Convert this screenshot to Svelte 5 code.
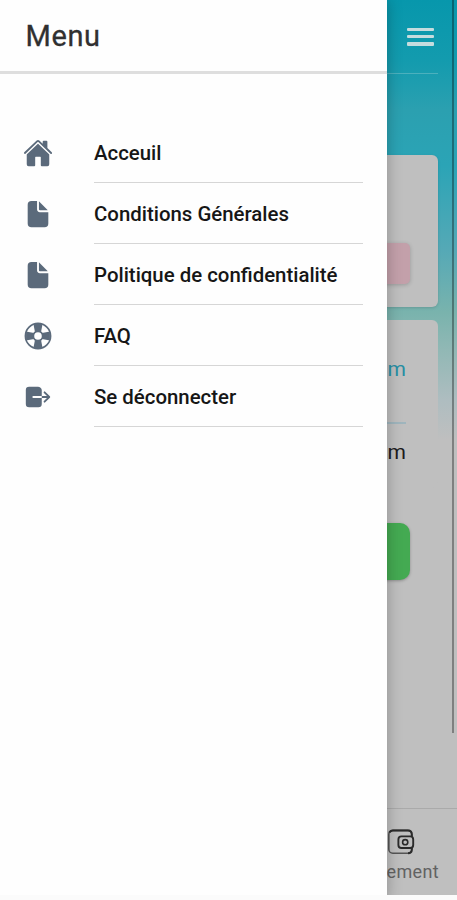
<script>
  const items = [
    { label: 'Acceuil', icon: 'home' },
    { label: 'Conditions Générales', icon: 'document' },
    { label: 'Politique de confidentialité', icon: 'document' },
    { label: 'FAQ', icon: 'help' },
    { label: 'Se déconnecter', icon: 'logout' }
  ];
</script>

<div class="app">
  <main class="page">
    <header class="topbar">
      <button class="burger" aria-label="Menu"><i></i><i></i><i></i></button>
    </header>
    <section class="card first"><div class="pink"></div></section>
    <section class="card second">
      <span class="unit blue">m</span>
      <div class="rule"></div>
      <span class="unit">m</span>
    </section>
    <div class="green"></div>
    <footer class="tabs">
      <svg class="wallet" viewBox="0 0 28 28" fill="none" stroke="#2b2b2b" stroke-width="1.6">
        <rect x="1.8" y="2.4" width="23" height="22.8" rx="4" stroke="#555" />
        <path d="M2.4 4.5Q3.4 2.4 5.8 2.4H21Q24.8 2.4 24.8 6.4V8.5M24.8 19.5V21.5Q24.8 25.2 21 25.2" stroke-width="2" />
        <rect x="11.4" y="8.4" width="14.8" height="11.6" rx="3" fill="#bfbfbf" stroke-width="1.9" />
        <circle cx="18.2" cy="14.2" r="2.6" />
      </svg>
      <span class="tab-label">ement</span>
    </footer>
    <div class="scrollbar"></div>
  </main>

  <aside class="drawer">
    <h1><span>Menu</span></h1>
    <nav>
      {#each items as item}
        <a class="item" href="#{item.icon}">
          <svg class="icon" viewBox="0 0 512 512" fill="currentColor">
            {#if item.icon === 'home'}
              <path d="M261.56 101.28a8 8 0 00-11.06 0L66.4 277.15a8 8 0 00-2.47 5.79L63.9 448a32 32 0 0032 32H192a16 16 0 0016-16V328a8 8 0 018-8h80a8 8 0 018 8v136a16 16 0 0016 16h96.06a32 32 0 0032-32V282.94a8 8 0 00-2.47-5.79z" />
              <path d="M490.91 244.15l-74.8-71.56V64a16 16 0 00-16-16h-48a16 16 0 00-16 16v32l-57.92-55.38C272.77 35.14 264.71 32 256 32c-8.68 0-16.72 3.14-22.14 8.63l-212.7 203.5c-6.22 6-7 15.87-1.34 22.37A16 16 0 0043 267.56L250.5 69.28a8 8 0 0111.06 0l207.52 198.28a16 16 0 0022.59-.44c6.14-6.36 5.63-16.86-.76-22.97z" />
            {:else if item.icon === 'document'}
              <path d="M428 224H288a48 48 0 01-48-48V36a4 4 0 00-4-4h-92a64 64 0 00-64 64v320a64 64 0 0064 64h224a64 64 0 0064-64V228a4 4 0 00-4-4z" />
              <path d="M419.22 188.59L275.41 44.78a2 2 0 00-3.41 1.41V176a16 16 0 0016 16h129.81a2 2 0 001.41-3.41z" />
            {:else if item.icon === 'help'}
              <circle cx="256" cy="256" r="215" fill="none" stroke="currentColor" stroke-width="28" />
              <circle cx="256" cy="256" r="80" fill="none" stroke="currentColor" stroke-width="30" />
              <path d="M178 52h156l-26 136H204zM178 460h156l-26-136H204zM52 178v156l136-26V204zM460 178v156l-136-26V204z" />
            {:else}
              <path d="M160 256a16 16 0 0116-16h144V136c0-32-33.79-56-64-56H104a56.06 56.06 0 00-56 56v240a56.06 56.06 0 0056 56h160a56.06 56.06 0 0056-56V272H176a16 16 0 01-16-16zM459.31 244.69l-80-80a16 16 0 00-22.62 22.62L409.37 240H320v32h89.37l-52.68 52.69a16 16 0 1022.62 22.62l80-80a16 16 0 000-22.62z" />
            {/if}
          </svg>
          <span class="label">{item.label}</span>
        </a>
      {/each}
    </nav>
  </aside>
</div>

<style>
  :global(body) { margin: 0; background: #fbfbfb; }
  .app {
    display: grid;
    grid-template-columns: 457px;
    width: 457px;
    height: 900px;
    overflow: hidden;
    font-family: Roboto, "Liberation Sans", sans-serif;
  }
  .page, .drawer { grid-area: 1 / 1; }
  .page {
    position: relative;
    box-sizing: border-box;
    height: 895px;
    display: flex;
    flex-direction: column;
    align-items: flex-end;
    background: linear-gradient(#0797ac 0, #139bae 60px, #2ba0b0 110px, #2ba4b6 165px, #55a9b6 250px, #79b3ad 312px, #91b8b5 350px, #aebdc0 400px, #bfbfbf 440px);
  }
  .topbar {
    box-sizing: border-box;
    width: 100%;
    height: 74px;
    padding: 28px 4px 0 0;
    flex: none;
    display: flex;
    justify-content: flex-end;
    border-bottom: 1px solid #4cb0bd;
    margin-right: 19px;
  }
  .burger {
    display: flex;
    flex-direction: column;
    gap: 4px;
    width: 27px;
    height: 18px;
    padding: 0;
    border: 0;
    background: none;
  }
  .burger i { height: 3.2px; width: 27px; flex: none; background: #c5dcde; border-radius: 1px; }
  .card {
    box-sizing: border-box;
    width: 400px;
    margin-right: 19px;
    border-radius: 6px;
    background: #bfbfbf;
    flex: none;
    display: flex;
    flex-direction: column;
    align-items: flex-end;
  }
  .first { height: 152px; margin-top: 81px; padding: 88px 28px 0; box-shadow: 0 1px 3px #0002; }
  .pink { width: 100px; height: 41px; border-radius: 5px; background: #c3a0aa; box-shadow: 0 1px 4px #0003; }
  .second { height: 168px; margin-top: 13px; padding: 36px 32px 0; }
  .unit { font-size: 21px; line-height: 26px; height: 26px; color: #1c1c1c; }
  .unit.blue { color: #288fa4; }
  .rule { width: 100px; height: 2px; background: #9fb5bd; margin: 40px 0 15px; }
  .green { width: 200px; height: 57px; margin: 35px 47px 0; flex: none; border-radius: 10px; background: #44aa52; box-shadow: 0 1px 3px #0004; }
  .tabs {
    box-sizing: border-box;
    width: 100%;
    height: 87px;
    margin-top: auto;
    padding: 19px 18px 0;
    border-top: 1px solid #aaa;
    display: flex;
    flex-direction: column;
    align-items: flex-end;
  }
  .wallet { width: 28px; height: 28px; margin-right: 24px; }
  .tab-label { margin-top: 4px; font-size: 18px; line-height: 24px; letter-spacing: 0.35px; color: #626262; }
  .scrollbar { position: absolute; top: 0; right: 3px; width: 2px; height: 733px; background: #0005; }
  .drawer {
    position: relative;
    z-index: 1;
    width: 387px;
    height: 900px;
    background: #fefefe;
    clip-path: inset(0 -18px 5px 0);
    box-shadow: 0 0 14px #0004;
  }
  h1 {
    box-sizing: border-box;
    height: 74px;
    margin: 0;
    padding: 19px 25.5px 0;
    border-bottom: 3px solid #dedede;
    font-size: 29px;
    line-height: 34px;
    font-weight: 400;
    letter-spacing: 0.6px;
    color: #303030;
    -webkit-text-stroke: 0.3px #303030;
  }
  nav { padding: 48px 24px 0 23px; }
  .item { display: flex; align-items: center; height: 61px; color: #5b6a7b; text-decoration: none; }
  .icon { width: 30px; height: 30px; margin-right: 41px; flex: none; }
  .label {
    flex: 1;
    box-sizing: border-box;
    height: 61px;
    padding-top: 1px;
    border-bottom: 1px solid #d6d6d6;
    font-size: 20.4px;
    line-height: 60px;
    font-weight: 500;
    white-space: nowrap;
    color: #161616;
  }
</style>
